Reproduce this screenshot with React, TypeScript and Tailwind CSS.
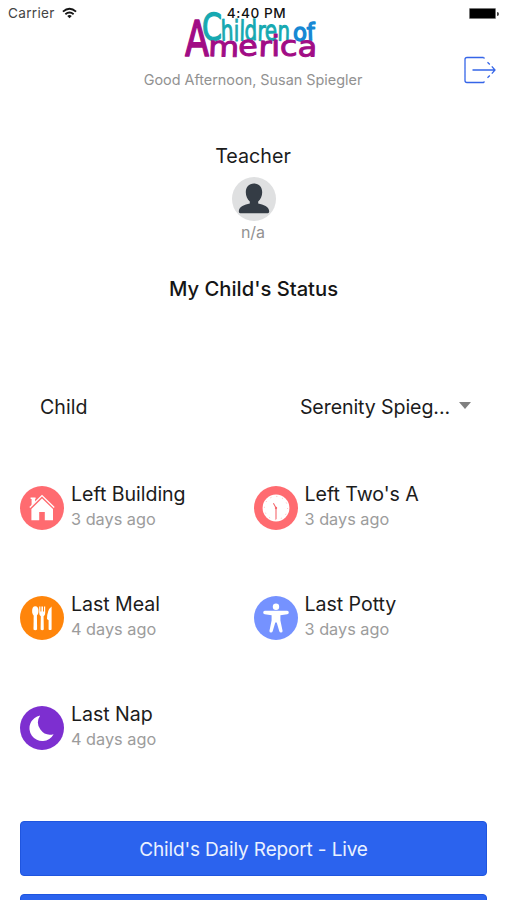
import type { ReactNode } from "react";

const STATUS: { title: string; ago: string; color: string; icon: ReactNode }[] = [
  { title: "Left Building", ago: "3 days ago", color: "bg-[#ff6b70]", icon: <HouseIcon /> },
  { title: "Left Two's A", ago: "3 days ago", color: "bg-[#ff6b70]", icon: <ClockIcon /> },
  { title: "Last Meal", ago: "4 days ago", color: "bg-[#ff850b]", icon: <MealIcon /> },
  { title: "Last Potty", ago: "3 days ago", color: "bg-[#7592ff]", icon: <PersonIcon /> },
  { title: "Last Nap", ago: "4 days ago", color: "bg-[#7d2fd0]", icon: <MoonIcon /> },
];

function HouseIcon() {
  return (
    <svg viewBox="0 0 44 44" className="size-11" fill="#fff">
      <path d="M10.6 11.4h5v1.6h-.5v3l-3.5 3.4V13h-1z" />
      <path d="M9.8 21.4 22 9.6l12.2 11.8" fill="none" stroke="#fff" strokeWidth="1.4" />
      <path d="M22 12.4 33 23v11.3h-8.2v-8.2h-5.6v8.2H11.4V23z" />
    </svg>
  );
}

function ClockIcon() {
  return (
    <svg viewBox="0 0 44 44" className="size-11">
      <circle cx="22" cy="22" r="13.4" fill="#fff" />
      <circle cx="22" cy="22" r="11.6" fill="none" stroke="#ffb3b5" strokeWidth="1" strokeDasharray="1 5.07" />
      <path d="m19.4 17.2 2.6 4.6v11.4" fill="none" stroke="#f4686d" strokeWidth="1.1" />
      <circle cx="22" cy="22" r="1.2" fill="#f4686d" />
    </svg>
  );
}

function MealIcon() {
  return (
    <svg viewBox="0 0 44 44" className="size-11" fill="#fff">
      <ellipse cx="15.3" cy="15" rx="3.2" ry="4.8" />
      <path d="M13.7 18h3.2l.2 15.600q-1.800 1.400-3.600 0z" />
      <path d="M19.200 10.400h1.200v5h1v-5h1.600v5h1v-5h1.200v6.600q0 2.400-1.600 3.200l.2 13.400q-1.500 1.300-3.200 0l.2-13.400q-1.600-.8-1.600-3.200z" />
      <path d="M31.600 10.400v23.100q-1.500 1.100-3 0V24.200l-1.600-1.200q0-9.300 4.600-12.600z" />
    </svg>
  );
}

function PersonIcon() {
  return (
    <svg viewBox="0 0 44 44" className="size-11" fill="#fff">
      <circle cx="22" cy="10.7" r="3.2" />
      <path d="M10.8 14.8h22.4q1.600.2 1.600 1.700t-1.600 1.700l-6.800 1v5.200l2.200 10.500q-.1 1.500-1.600 1.600-1.300 0-1.700-1.300l-2.600-8.800h-1.400l-2.600 8.800q-.4 1.300-1.700 1.300-1.500-.1-1.600-1.600l2.200-10.500v-5.200l-6.800-1q-1.600-.2-1.600-1.700t1.600-1.700z" />
    </svg>
  );
}

function MoonIcon() {
  return (
    <svg viewBox="0 0 44 44" className="size-11" fill="#fff">
      <path d="M20.2 9.6A12.8 12.8 0 1 0 33.6 28.2A12.2 12.2 0 0 1 20.2 9.6z" />
    </svg>
  );
}

function Logo() {
  return (
    <svg viewBox="0 0 136 50" className="h-[50px] w-[136px] overflow-visible" fontFamily="'DejaVu Sans', sans-serif" strokeLinejoin="round">
      <g fill="#16a9b1" stroke="#16a9b1">
        <text x="17" y="29.5" fontSize="38" textLength="20" lengthAdjust="spacingAndGlyphs" strokeWidth="1.3">C</text>
        <text x="36" y="30.5" fontSize="28" textLength="69" lengthAdjust="spacingAndGlyphs" rotate="-2 0 2 -2 2 -2 2" strokeWidth="1">hildren</text>
      </g>
      <text x="108" y="30.5" fontSize="24" textLength="22" lengthAdjust="spacingAndGlyphs" rotate="0 -2" fill="#1688d4" stroke="#1688d4" strokeWidth="1.4">of</text>
      <g fill="#a10c85" stroke="#a10c85">
        <text x="0" y="46" fontSize="50" textLength="24" lengthAdjust="spacingAndGlyphs" strokeWidth="1.6">A</text>
        <text x="23" y="46" fontSize="28" textLength="109" lengthAdjust="spacingAndGlyphs" rotate="2 -3 2 0 -2 2" strokeWidth="1">merica</text>
      </g>
    </svg>
  );
}

function StatusBar() {
  return (
    <div className="relative z-10 flex h-[27px] items-center justify-between pl-2 pr-[7px] text-[13px]">
      <div className="flex flex-1 items-center gap-[7px] text-[#444]">
        <span className="w-[47px] text-[13.6px] tracking-[0.3px]">Carrier</span>
        <svg viewBox="0 0 16 12" className="mb-px h-3 w-[15px]" fill="none" stroke="#151515" strokeWidth="2">
          <path d="M1 4.5q7-6 14 0M3.6 7.3q4.4-3.7 8.8 0" />
          <path d="m8 11.5-2.4-2.4q2.4-1.8 4.8 0z" fill="#151515" stroke="none" />
        </svg>
      </div>
      <span className="pl-1.5 text-[13.6px] font-medium tracking-[0.6px] text-[#111]">4:40 PM</span>
      <div className="flex flex-1 items-center justify-end gap-px">
        <span className="h-[11px] w-[27px] rounded-[1px] border border-[#777] bg-black" />
        <span className="h-1 w-[2px] rounded-r bg-[#444]" />
      </div>
    </div>
  );
}

export default function App() {
  return (
    <div className="h-[900px] w-[506px] overflow-hidden bg-white font-['Inter',sans-serif] text-[#1c1c1c]">
      <StatusBar />

      {/* Header */}
      <header className="relative -mt-[17px] flex h-[80px] flex-col items-center">
        <Logo />
        <p className="mt-[10px] text-[14.4px] leading-5 text-[#929292]">Good Afternoon, Susan Spiegler</p>
        <button aria-label="Log out" className="absolute right-[9px] top-[46px]">
          <svg viewBox="0 0 34 28" className="h-7 w-[34px]" fill="none" stroke="#3565e8" strokeWidth="1.3">
            <path d="M20.5 1.5H4q-2 0-2 2v21q0 2 2 2h16.5l1-1M9.5 14H32M20.5 1.5l1 1M24.5 6.2l2.3 2.3M28.8 10.4 32 14l-3.2 3.6M26.8 19.5l-2.3 2.3" />
          </svg>
        </button>
      </header>

      {/* Teacher */}
      <section className="mt-[54px] flex flex-col items-center">
        <h2 className="text-[19.7px] leading-6">Teacher</h2>
        <svg viewBox="0 0 44 44" className="mt-[9px] ml-px size-11">
          <circle cx="22" cy="22" r="22" fill="#dfe0e1" />
          <path d="M22 6.500c5.200 0 8.200 3.600 8.200 8.800 0 4-1.600 7.200-4 9.100v2.200c5 1.200 11 2.800 11 8q0 1.600-1.400 1.600H8.200q-1.400 0-1.400-1.600c0-5.200 6-6.800 11-8v-2.200c-2.400-1.900-4-5.100-4-9.100 0-5.200 3-8.800 8.200-8.800z" fill="#343c45" />
        </svg>
        <p className="text-[16px] leading-[22px] text-[#929292]">n/a</p>
      </section>

      <h1 className="mt-[33px] pl-px text-center text-[20.2px] font-medium leading-[26px] text-[#151515]">My Child's Status</h1>

      {/* Child picker */}
      <div className="mt-[92px] flex h-[26px] items-center justify-between pl-10 pr-[35px] text-[19.6px]">
        <span className="pt-0.5">Child</span>
        <button className="flex items-center gap-[9px]">
          <span className="pt-0.5 tracking-[-0.1px]">Serenity Spieg...</span>
          <svg viewBox="0 0 12 7" className="mb-1 h-[7px] w-3" fill="#808080">
            <path d="M0 0h12L6 7z" />
          </svg>
        </button>
      </div>

      <div className="mt-[58px] grid grid-cols-2 gap-y-[54px] pl-5 pr-[19px]">
        {STATUS.map((s) => (
          <div key={s.title} className="flex h-14 items-center gap-[7px]">
            <div className={`mt-[3px] size-11 shrink-0 rounded-full ${s.color}`}>{s.icon}</div>
            <div>
              <p className="pt-px text-[19.6px] leading-[26px] tracking-[-0.05px]">{s.title}</p>
              <p className="text-[16.3px] leading-[25px] text-[#9c9c9c]">{s.ago}</p>
            </div>
          </div>
        ))}
      </div>

      {/* Actions */}
      <div className="mt-[67px] flex flex-col gap-[18px] pl-5 pr-[19px]">
        <button className="h-[55px] rounded-[4px] border border-[#1f55df] bg-[#2b63ee] pt-1 text-[19px] tracking-[-0.15px] text-[#eaf1ff]">Child's Daily Report - Live</button>
        <div className="h-[55px] rounded-[4px] border border-[#1f55df] bg-[#2b63ee]" />
      </div>
    </div>
  );
}
